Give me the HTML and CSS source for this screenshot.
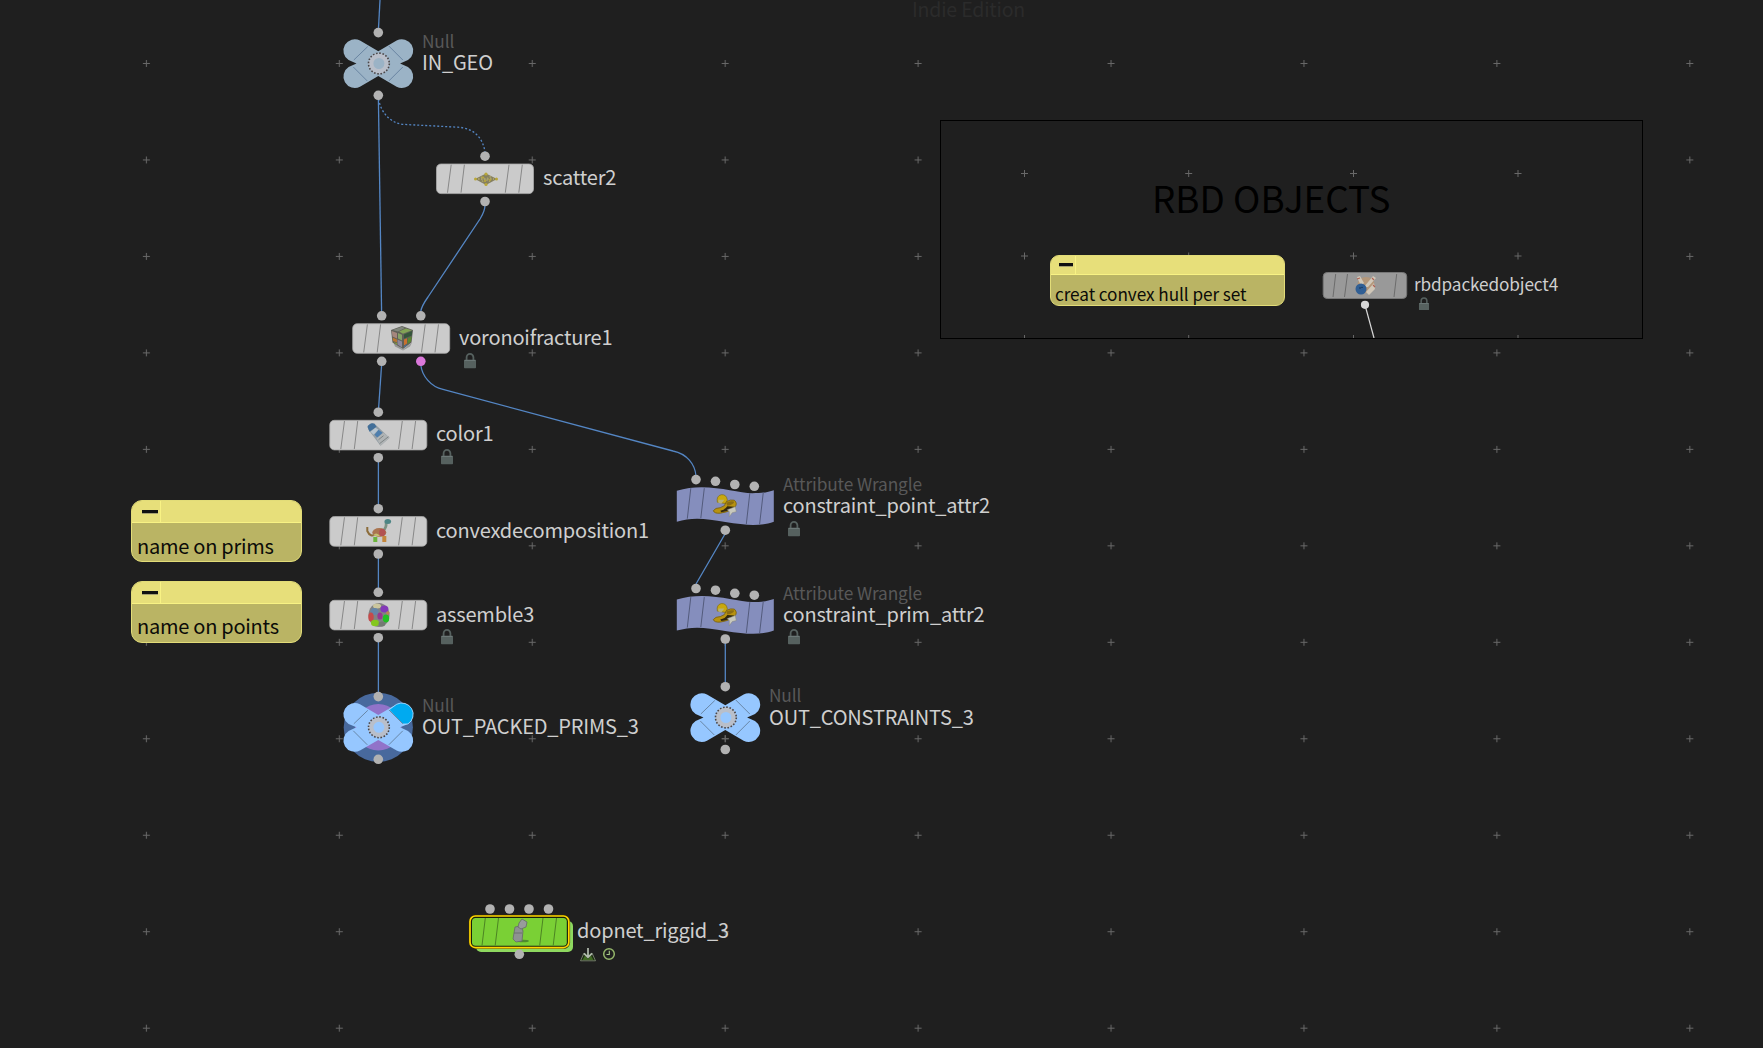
FILE: index.html
```html
<!DOCTYPE html>
<html lang="en">
<head>
<meta charset="utf-8">
<title>Network editor</title>
<link rel="stylesheet" href="styles.css">
</head>
<body>
<svg class="defs" aria-hidden="true">
  <defs>
    <g id="cross"><path d="M-3.5 0H3.5M0-3.5V3.5"/></g>
    <g id="body">
      <rect x="-48.5" y="-14.7" width="97" height="29.6" rx="4.5"/>
      <path class="slat" d="M-33.8-14L-37.5 14M-20.6-14L-24 14M24-14L20.3 14M37.3-14L33.8 14"/>
    </g>
    <g id="null-ring">
      <circle class="ring-fill" r="8"/>
      <circle class="ring-dots" r="10.4"/>
    </g>
    <g id="null-body">
      <path d="M0-12.3L-18.3-23A11.35 11.35 0 0 0-29.7-3.4L-21.8 0L-29.7 3.6A11.35 11.35 0 0 0-18.3 23.2L0 12.6L18.3 23.2A11.35 11.35 0 0 0 29.7 3.6L21.8 0L29.7-3.4A11.35 11.35 0 0 0 18.3-23Z"/>
    </g>
    <g id="null-slats"><path class="slat" d="M-10.5-17L-24.5-3.5M-25 3.5L-11 17.5M10.5-17.5L24.5-3.5M24.5 3.5L10.5 17.5"/></g>
    <g id="ribbon">
      <path d="M-48.5-16C-20-25 10-14 27-13.5C37-13.5 43-14.5 48.5-16.5V15C36 19.5 22 19 0 15.4C-20 11.5-34 10.5-48.5 15Z"/>
      <path class="slat" d="M-34.5-18.5L-38 12M-21-18.5L-24.5 11.5M24.5-13.5L21 17.5M38-14.5L34.3 17.5"/>
    </g>
    <g id="lock">
      <path d="M-3.4 0V-3.8A3.4 3.4 0 0 1 3.4-3.8V0" fill="none" stroke="#56615f" stroke-width="1.8"/>
      <rect x="-6" y="-1.2" width="12" height="8.4" rx=".8" fill="#56615f"/>
      <path d="M-5.4-.6H5.4" stroke="#738080" stroke-width=".8"/>
    </g>
    <g id="hat">
      <path d="M-8-4.5Q-9-11-4-12Q1-12.5 2-7L1-3Z" fill="#c9a80e" stroke="#806d18" stroke-width=".7"/>
      <path d="M-7-7L-1-7L-4-3L-7-4Z" fill="#b7b173"/>
      <path d="M-12 4Q-10 1-5 1Q0 0 1-5Q5-7.5 9-6.5Q13-3 9 1Q2 6-5 6.5Q-11 7-12 4" fill="#b8920f" stroke="#755d0e" stroke-width=".8"/>
      <path d="M1-4Q6-6 9-5Q8-2 2-1Z" fill="#8a6c12"/>
      <path d="M-5 4Q0 3 2-.5L9 0Q3 5-4 5.5" fill="#30270e"/>
      <path d="M2 3L10 0L11 5L7 6L4 10V5Z" fill="#c8c8bd" stroke="#86867d" stroke-width=".5"/>
    </g>
  </defs>
</svg>

<main class="network">
  <svg class="layer" viewBox="0 0 1763 1048">
    <defs>
      <pattern id="grid" x="49.9" y="15.25" width="192.93" height="96.47" patternUnits="userSpaceOnUse">
        <path class="grid-mark" d="M93 48.25H100M96.5 44.75V51.75"/>
      </pattern>
    </defs>
    <rect width="1763" height="1048" fill="url(#grid)"/>
  </svg>
  <p class="edition">Indie Edition</p>

  <svg class="layer" viewBox="0 0 1763 1048">
    <g class="wires">
      <path d="M380 0L378.5 28"/>
      <path d="M378.4 99L381.6 312"/>
      <path class="dotted" d="M378.5 99C381 112 389 122 402 124.3L458 127.2C474 128 483 138 485 152"/>
      <path d="M485 205C485 211 483 214 480 219L428 297C423 304 421 308 420.7 312"/>
      <path d="M381.6 365L378.6 408"/>
      <path d="M420.8 365C422 376 431 387 443 389.4L673 451C687 454 695 464 696 476"/>
      <path d="M378.4 461V505M378.4 558V588M378.4 641V693"/>
      <path d="M725 534L696 584M725.3 643V683"/>
    </g>

    <g class="flags">
      <circle cx="378.3" cy="727.3" r="34.6" fill="#48699d"/>
      <circle cx="378.3" cy="727.3" r="23.2" fill="#9173c9"/>
    </g>
    <g class="null muted" transform="translate(378.3 63.5)"><use href="#null-body"/><use href="#null-slats"/><use href="#null-ring" x=".6"/></g>
    <g class="null" transform="translate(378.3 727.3)"><use href="#null-body"/><path class="display-flag" d="M10.8-17.5L18.3-23A11.35 11.35 0 0 1 29.7-3.4L24.5-3.2Z"/><use href="#null-slats"/><use href="#null-ring" x=".6"/></g>
    <g class="null" transform="translate(725.3 717.5)"><use href="#null-body"/><use href="#null-slats"/><use href="#null-ring" x=".6"/></g>

    <g class="tile">
      <use href="#body" x="485" y="178.7"/>
      <use href="#body" x="401.2" y="338.4"/>
      <use href="#body" x="378.3" y="435"/>
      <use href="#body" x="378.3" y="531.3"/>
      <use href="#body" x="378.3" y="615"/>
    </g>
    <g class="wrangle"><use href="#ribbon" x="725.3" y="506.7"/><use href="#ribbon" x="725.3" y="615.6"/></g>
    <use href="#hat" x="725.3" y="506.7"/><use href="#hat" x="725.3" y="615.6"/>

    <g class="icon-scatter" transform="translate(486 179)">
      <path d="M-11 0L0-5.5L11 0L0 6Z" fill="#86805f"/>
      <path d="M-8 0H8M-5-2L4 2.5M5-2.5L-4 2.5" stroke="#aaa16c" stroke-width="1.8" stroke-dasharray="1.6 1.4"/>
      <g fill="#b9a739"><circle cx="-10.5" r="1.5"/><circle cx="10.5" r="1.5"/><circle cy="-5" r="1.6"/><circle cy="5.5" r="1.6"/><circle cx="-3" cy="-1.5" r="1.1"/><circle cx="4" cy="1" r="1.1"/><circle cx="-1" cy="2" r="1.1"/></g>
    </g>
    <g class="icon-voronoi" transform="translate(402 337.5)">
      <path d="M-9 4L1 12L10 5L8 9L1 13L-7 9Z" fill="#777" opacity=".6"/>
      <path d="M-11-7.5L0-11.5L11-7.5L9.5 5L1 11.5L-9.5 5Z" fill="#5f5f58"/>
      <path d="M-9.5-7.5L0-10.8L3-9.5L-4-6Z" fill="#81877c"/><path d="M-3-6L4-9L10-7.3L1-3.8Z" fill="#82a355"/>
      <path d="M-10.3-6.5L-5-4.5L-5 1L-9.5-1Z" fill="#a5867d"/><path d="M-4-4.4L0-2.8V3L-4 1Z" fill="#87a266"/>
      <path d="M-9.3 0L-5 2V5L-9 3.5Z" fill="#b77632"/><path d="M-4.5 2L0 4V10L-4.5 7Z" fill="#8d8799"/><path d="M-8.8 4.3L-5 5.8V7.5Z" fill="#7f9c3d"/>
      <path d="M2-3L10.2-6.5L9.8-2L2 1Z" fill="#35563b"/><path d="M2 2L5 .8V6L2 8Z" fill="#c9702f"/><path d="M6 .4L9.6-1L9 4L5.5 6.5Z" fill="#598730"/><path d="M2 8.8L5 6.8L4.5 8.2L2 10Z" fill="#4a6ea0"/>
    </g>
    <g class="icon-tube" transform="translate(378.5 434.7)">
      <path d="M-11-8Q-8-13-4-11L11 3L2 11L-10-5Z" fill="#929da4"/>
      <path d="M-11-8Q-8-13-4-11L-2-8L-9-3Z" fill="#426f99"/>
      <path d="M-8-3L-3-7L0-5L-5 0Z" fill="#b7c5d0"/>
      <path d="M-4 0L0-5L4-2L-1 3Z" fill="#4d7eae"/>
      <path d="M-2 3.5L5-2L11 3L2 11Z" fill="#b0b4b5"/><path d="M1 9L10 2M0 5L5 1" stroke="#7f8586" stroke-width="1"/>
    </g>
    <g class="icon-dino" transform="translate(378.3 531)">
      <path d="M-11-4V0Q-8 7-2 3" fill="none" stroke="#8c6c3a" stroke-width="2"/>
      <path d="M4.5 0Q9-4 7.5-9" fill="none" stroke="#7b9284" stroke-width="2.6"/>
      <ellipse cx="9.5" cy="-9.5" rx="3.3" ry="2.5" fill="#4c8585"/>
      <ellipse cx="1" cy="1.5" rx="7" ry="4.4" fill="#aa7550"/><ellipse cx="4" cy="1.5" rx="3.2" ry="3.8" fill="#b25252"/>
      <path d="M-5 4.5Q-2 0 2 5.5Z" fill="#c5c073"/><path d="M-5 6H-1V11H-5Z" fill="#6bb53b"/><path d="M4 5H8V11H4Z" fill="#c4863b"/>
    </g>
    <g class="icon-egg" transform="translate(379 615)">
      <ellipse rx="10.5" ry="12" fill="#828282"/>
      <ellipse cx="-2" cy="-9" rx="4" ry="2.5" fill="#cbc69e"/><ellipse cx="5.4" cy="-6" rx="4" ry="3.6" fill="#8338b8"/>
      <ellipse cx="-4.5" cy="-3.5" rx="4" ry="3.6" fill="#6585a8"/><ellipse cx="-8" cy="2" rx="2.7" ry="4.6" fill="#c64a4a"/>
      <ellipse cx="1" cy="1" rx="2.6" ry="3.6" fill="#973790"/><ellipse cx="7" cy="3.5" rx="3.2" ry="4" fill="#22bf24"/>
      <ellipse cx="-4" cy="8" rx="4" ry="3.3" fill="#84c71d"/><ellipse cx="3" cy="9" rx="3.4" ry="2.4" fill="#737b73"/><circle cx="8.8" cy="-2" r="1.7" fill="#b88356"/>
    </g>

    <g class="dopnet">
      <rect x="476" y="921" width="97" height="31" rx="5" fill="#8ed85f"/>
      <rect x="468.7" y="914.8" width="101.4" height="34" rx="6.5" fill="#3a2c00"/>
      <rect x="470" y="916" width="98.8" height="31.6" rx="5.4" fill="#17200d" stroke="#ffd600" stroke-width="1.7"/>
      <rect x="472" y="918" width="94.8" height="27.8" rx="3.5" fill="#7ad035"/>
      <path d="M485.3 918L482 945.5M498.5 918L495.2 945.5M543 918L539.7 945.5M556.5 918L553.2 945.5" stroke="#4c8423"/>
      <ellipse cx="523" cy="941" rx="6" ry="1.3" fill="#4f8b2c"/>
      <path d="M515 927L521 926L523 931L522 941L516 942L513 939Z" fill="#8e9291" stroke="#656968" stroke-width=".8"/>
      <path d="M519 923L522 919L527 922L526 927L521 929L518 927Z" fill="#989c9b" stroke="#656968" stroke-width=".8"/>
      <path d="M514 933H522" stroke="#656968" stroke-width=".8"/>
      <path d="M584 953L580.5 960.8H595.5L592 953" fill="#1d2915" stroke="#87937b" stroke-width=".8"/>
      <path d="M582.5 960L585 955.5L588 959L591 955.5L593.5 960Z" fill="#3f6a22"/>
      <path d="M588 948V956.5M584 953.3L588 957.3L592 953.3" fill="none" stroke="#b4bdb0" stroke-width="1.7"/>
      <circle cx="609" cy="954" r="5.3" fill="none" stroke="#94b66a" stroke-width="1.5"/><path d="M609.3 950.8V954.5H606.5" fill="none" stroke="#a9c98a" stroke-width="1.1"/>
    </g>

    <g class="ports">
      <circle cx="378.3" cy="32.6" r="4.8"/><circle cx="378.3" cy="95.3" r="4.8"/>
      <circle cx="485" cy="156.2" r="4.8"/><circle cx="485" cy="201.5" r="4.8"/>
      <circle cx="381.7" cy="315.8" r="4.8"/><circle cx="420.8" cy="315.8" r="4.8"/>
      <circle cx="381.7" cy="361.3" r="4.8"/><circle class="hot" cx="420.8" cy="361.3" r="4.8"/>
      <circle cx="378.3" cy="412.2" r="4.8"/><circle cx="378.3" cy="457.7" r="4.8"/>
      <circle cx="378.3" cy="508.7" r="4.8"/><circle cx="378.3" cy="554" r="4.8"/>
      <circle cx="378.3" cy="592.3" r="4.8"/><circle cx="378.3" cy="637.7" r="4.8"/>
      <circle cx="378.3" cy="696.6" r="4.8"/><circle cx="378.3" cy="759.3" r="4.8"/>
      <circle cx="696" cy="479.6" r="4.8"/><circle cx="715.5" cy="481.3" r="4.8"/><circle cx="734.8" cy="484.5" r="4.8"/><circle cx="754.3" cy="486.3" r="4.8"/>
      <circle cx="725.3" cy="530.2" r="4.8"/>
      <circle cx="696" cy="588.5" r="4.8"/><circle cx="715.5" cy="590.2" r="4.8"/><circle cx="734.8" cy="593.3" r="4.8"/><circle cx="754.3" cy="595.2" r="4.8"/>
      <circle cx="725.3" cy="639" r="4.8"/><circle cx="725.3" cy="686.7" r="4.8"/><circle cx="725.3" cy="749.5" r="4.8"/>
      <circle cx="490" cy="909" r="4.8"/><circle cx="509.5" cy="909" r="4.8"/><circle cx="529" cy="909" r="4.8"/><circle cx="548.5" cy="909" r="4.8"/>
      <circle cx="519.3" cy="954.3" r="4.8"/>
    </g>
    <use href="#lock" x="470" y="361"/><use href="#lock" x="447" y="457"/><use href="#lock" x="447" y="637"/>
    <use href="#lock" x="794" y="529"/><use href="#lock" x="794" y="637"/>
    <g class="grid-mark"><use href="#cross" x="725.3" y="738.7"/></g>
  </svg>

  <div class="label at-in-geo"><span class="kind">Null</span><span class="name">IN_GEO</span></div>
  <div class="label at-scatter"><span class="name">scatter2</span></div>
  <div class="label at-voronoi"><span class="name">voronoifracture1</span></div>
  <div class="label at-color"><span class="name">color1</span></div>
  <div class="label at-convex"><span class="name">convexdecomposition1</span></div>
  <div class="label at-assemble"><span class="name">assemble3</span></div>
  <div class="label at-packed"><span class="kind">Null</span><span class="name">OUT_PACKED_PRIMS_3</span></div>
  <div class="label at-point"><span class="kind">Attribute Wrangle</span><span class="name">constraint_point_attr2</span></div>
  <div class="label at-prim"><span class="kind">Attribute Wrangle</span><span class="name">constraint_prim_attr2</span></div>
  <div class="label at-constraints"><span class="kind">Null</span><span class="name">OUT_CONSTRAINTS_3</span></div>
  <div class="label at-dopnet"><span class="name">dopnet_riggid_3</span></div>

  <article class="note note-prims"><header><i></i></header><p>name on prims</p></article>
  <article class="note note-points"><header><i></i></header><p>name on points</p></article>

  <section class="inset">
    <svg class="inset-art" viewBox="940 120 703 218">
      <g class="grid-mark">
        <use href="#cross" x="1024.5" y="173.5"/><use href="#cross" x="1188.7" y="173.5"/><use href="#cross" x="1353.5" y="173.5"/><use href="#cross" x="1518" y="173.5"/>
        <use href="#cross" x="1024.5" y="256"/><use href="#cross" x="1188.7" y="256"/><use href="#cross" x="1353.5" y="256"/><use href="#cross" x="1518" y="256"/>
        <use href="#cross" x="1024.5" y="338.5"/><use href="#cross" x="1188.7" y="338.5"/><use href="#cross" x="1353.5" y="338.5"/><use href="#cross" x="1518" y="338.5"/>
      </g>
      <path d="M1365 305L1374 338" stroke="#d8d8d8" stroke-width="1.2"/>
      <rect x="1323.2" y="272.5" width="83.5" height="26" rx="4" fill="#999" stroke="#777"/>
      <path d="M1335.7 274L1333 297M1347.5 274L1344.5 297M1396.7 274L1394 297" stroke="#6c6c6c"/>
      <g transform="translate(1365 285)">
        <ellipse cx="1" cy="0" rx="8.5" ry="8" fill="#b3977a"/>
        <path d="M-8-8L-5-9L-1-2L-4 1ZM8-9L11-7L3 2L-1 2ZM9-2L10 4L4 10L1 7Z" fill="#d0c7b8"/>
        <path d="M-8-6L-5-7M7-7L9-5M8 0L10 2" stroke="#b06052" stroke-width="1.1"/>
        <circle cx="-4" cy="4" r="5.5" fill="#315f94"/><circle cx="-5" cy="3" r=".8" fill="#152f4e"/><circle cx="-3" cy="2.4" r=".7" fill="#152f4e"/>
      </g>
      <circle cx="1365" cy="304.8" r="4.1" fill="#d8d8d8"/>
      <g transform="translate(1424 304) scale(.84)"><use href="#lock"/></g>
    </svg>
    <h1>RBD OBJECTS</h1>
    <span class="object-name">rbdpackedobject4</span>
    <article class="note small"><header><i></i></header><p>creat convex hull per set</p></article>
  </section>
</main>
</body>
</html>
```
FILE: styles.css
```css
body {
  margin: 0;
  background: #1f1f1f;
  font-family: "Noto Sans CJK SC", "Noto Sans", sans-serif;
}

.defs { position: absolute; width: 0; height: 0; }

.network {
  position: relative;
  width: 1763px;
  height: 1048px;
  overflow: hidden;
  background: #1f1f1f;
}

.layer { position: absolute; inset: 0; width: 1763px; height: 1048px; }

.grid-mark { fill: none; stroke: #686868; stroke-width: 1; }

.edition {
  position: absolute;
  left: 912px;
  top: -6px;
  margin: 0;
  font-size: 19.5px;
  letter-spacing: -.18px;
  line-height: 30px;
  color: #2b2b2b;
  white-space: nowrap;
}

.wires { fill: none; stroke: #5486c4; stroke-width: 1.3; }
.dotted { stroke-dasharray: 2 2; }

.tile { fill: #cbcbcb; stroke: #aaa; stroke-width: .8; }
.slat { fill: none; stroke: #888; stroke-width: 1; }
.wrangle { fill: #858ebd; }
#ribbon .slat { stroke: #535b7c; }

.null { fill: #96c7ff; }
.null.muted { fill: #9bb3c6; }
#null-slats .slat { stroke: #637f9d; stroke-width: .9; }
.ring-fill { stroke: #b9bfca; stroke-width: 5; }
.ring-dots { fill: none; stroke: #4a4648; stroke-width: 1.6; stroke-dasharray: 1.6 1.67; }
.display-flag { fill: #00aaf0; stroke: #b3dcff; stroke-width: .8; }

.ports { fill: #b2b2b2; }
.ports .hot { fill: #da78da; }

.label {
  position: absolute;
  display: flex;
  flex-direction: column;
  white-space: nowrap;
}
.kind { font-size: 17.3px; letter-spacing: -.13px; line-height: 20px; color: #585858; }
.name { font-size: 20px; letter-spacing: -.18px; line-height: 22px; color: #cfcfcf; }

.at-in-geo { left: 422px; top: 31px; }
.at-scatter { left: 543px; top: 166px; }
.at-voronoi { left: 459px; top: 326px; }
.at-color { left: 436px; top: 422px; }
.at-convex { left: 436px; top: 519px; }
.at-assemble { left: 436px; top: 603px; }
.at-packed { left: 422px; top: 695px; }
.at-point { left: 783px; top: 474px; }
.at-prim { left: 783px; top: 583px; }
.at-constraints { left: 769px; top: 685px; gap: 1px; }
.at-dopnet { left: 577px; top: 919px; }

.note {
  position: absolute;
  box-sizing: border-box;
  width: 171px;
  height: 62px;
  border: 1px solid #e2dc78;
  border-radius: 11px;
  overflow: hidden;
  background: #bab464;
}
.note header {
  box-sizing: border-box;
  height: 22px;
  border-bottom: 1px solid #f8f284;
  background: linear-gradient(90deg, transparent 28px, #f8f284 28px 29px, transparent 29px), #e7df7a;
}
.note header i {
  display: block;
  width: 16px;
  height: 3px;
  margin-left: 9.5px;
  background: #111;
  border-bottom: 1px solid #a7a170;
  transform: translateY(9px);
}
.note p {
  margin: 0;
  padding: 7px 0 0 5px;
  font-size: 20px;
  letter-spacing: -.25px;
  line-height: 30px;
  color: #0b0b08;
  white-space: nowrap;
}
.note-prims { left: 131px; top: 500px; }
.note-prims p { padding-top: 8px; }
.note-points { left: 131px; top: 581px; }

.inset {
  position: absolute;
  left: 940px;
  top: 120px;
  width: 703px;
  height: 219px;
  box-sizing: border-box;
  border: 1px solid #000;
  background: #1f1f1f;
}
.inset-art { position: absolute; left: -1px; top: -1px; width: 703px; height: 218px; }
.inset h1 {
  margin: 48px 0 0 211px;
  font-size: 36.8px;
  font-weight: 400;
  line-height: 56px;
  color: #000;
  white-space: nowrap;
}
.object-name {
  position: absolute;
  left: 473px;
  top: 149px;
  font-size: 17.2px;
  letter-spacing: -.12px;
  line-height: 28px;
  color: #cfcfcf;
}
.note.small { left: 109px; top: 134px; width: 235px; height: 51px; border-radius: 9px; }
.small header { height: 19px; background: linear-gradient(90deg, transparent 24px, #f8f284 24px 25px, transparent 25px), #e7df7a; }
.small header i { width: 14px; height: 3px; margin-left: 8px; transform: translateY(7px); }
.small p { padding: 5px 0 0 4px; font-size: 17.2px; letter-spacing: -.07px; line-height: 28px; }
```
